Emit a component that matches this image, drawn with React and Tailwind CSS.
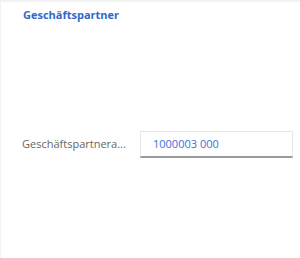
import React from 'react';

const App = () => {
    return (
        <div className="w-[300px] h-[258px] bg-[#f2f2f2] pt-[2px] pl-[1px] overflow-hidden" style={{ fontFamily: '"Open Sans", sans-serif' }}>
            <div className="h-full bg-white flex flex-col">
                <h2 className="pl-[22px] pt-[5px] text-[11px] leading-[16px] font-bold text-[#3068c8]">
                    Geschäftspartner
                </h2>

                <div className="mt-[108px] flex items-center pl-[21px] pr-[7px]">
                    <label className="w-[118px] text-[11px] text-[#666666] truncate">
                        Geschäftspartnera...
                    </label>
                    <div className="flex-1 h-[27px] border border-[#e6e6e6] border-b-2 border-b-[#9a9a9a] flex items-center pl-[12px] text-[11px] text-[#3a70d8]">
                        1000003 000
                    </div>
                </div>
            </div>
        </div>
    );
};

export default App;
